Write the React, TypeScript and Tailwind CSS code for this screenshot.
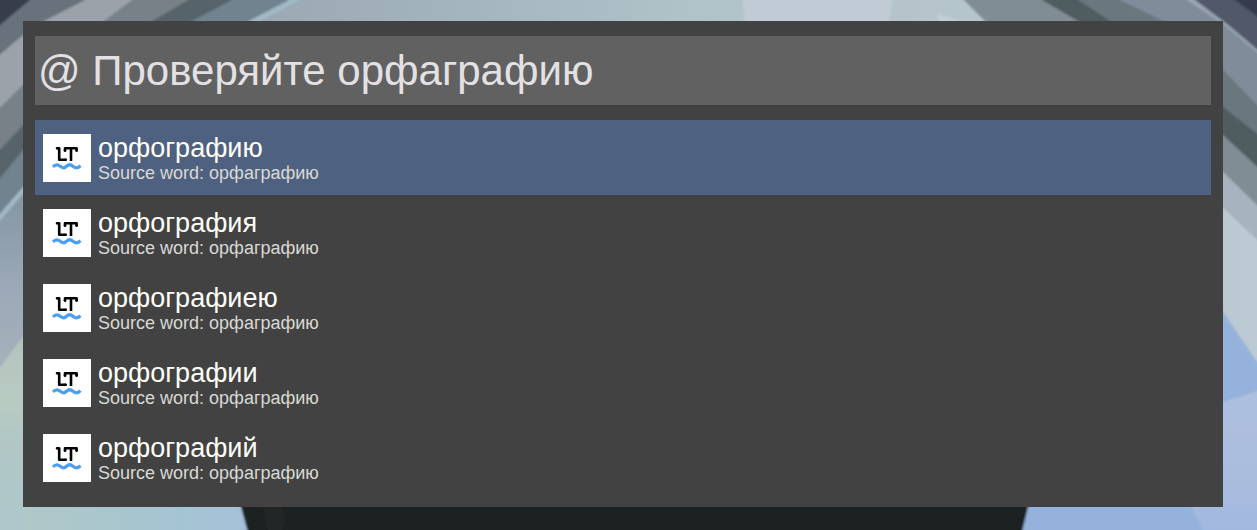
import { useState } from "react";

const SUGGESTIONS = ["орфографию", "орфография", "орфографиею", "орфографии", "орфографий"];

function Wallpaper() {
  return (
    <svg
      className="absolute inset-0 h-full w-full"
      viewBox="0 0 1257 530"
      preserveAspectRatio="none"
      aria-hidden="true"
    >
      <defs>
        <linearGradient id="sky" x1="0" y1="0" x2="1" y2="0">
          <stop offset="0" stopColor="#8d9caa" />
          <stop offset="0.3" stopColor="#a0afb9" />
          <stop offset="0.55" stopColor="#b0c3c9" />
          <stop offset="0.72" stopColor="#b4c4ca" />
          <stop offset="1" stopColor="#bccad3" />
        </linearGradient>
        <linearGradient id="leftShade" x1="0" y1="200" x2="0" y2="370" gradientUnits="userSpaceOnUse">
          <stop offset="0" stopColor="#8597a4" />
          <stop offset="0.5" stopColor="#9ba8b7" />
          <stop offset="1" stopColor="#a5b2bb" />
        </linearGradient>
        <linearGradient id="meadow" x1="0" y1="340" x2="0" y2="530" gradientUnits="userSpaceOnUse">
          <stop offset="0" stopColor="#b4c4bf" />
          <stop offset="0.3" stopColor="#b8cac2" />
          <stop offset="0.6" stopColor="#b0c7c6" />
          <stop offset="1" stopColor="#adc7cb" />
        </linearGradient>
        <linearGradient id="floor" x1="20" y1="0" x2="245" y2="0" gradientUnits="userSpaceOnUse">
          <stop offset="0" stopColor="#b0c8c8" />
          <stop offset="0.6" stopColor="#a6c5d0" />
          <stop offset="1" stopColor="#a5c1da" />
        </linearGradient>
        <linearGradient id="haze" x1="0" y1="390" x2="0" y2="530" gradientUnits="userSpaceOnUse">
          <stop offset="0" stopColor="#adc0df" />
          <stop offset="0.5" stopColor="#acbedd" />
          <stop offset="1" stopColor="#a2b8df" />
        </linearGradient>
        <filter id="soft" x="-5%" y="-5%" width="110%" height="110%">
          <feGaussianBlur stdDeviation="1.2" />
        </filter>
      </defs>
      <rect width="1257" height="530" fill="url(#sky)" />
      <rect y="180" width="60" height="200" fill="url(#leftShade)" />
      <g filter="url(#soft)">
        <path d="M-9 231L23 194L260 21L300 0V-9H-9Z" fill="#a3bac6" />
        <path d="M-9 224L23 187L249 21L289 0V-9H-9Z" fill="#6f838e" />
        <path d="M-9 189L23 150L152 47L192 21L232 0V-9H-9Z" fill="#57646a" />
        <path d="M-9 159L23 125L152 21L188 0V-9H-9Z" fill="#788187" />
        <path d="M-9 116L23 85L104 21L132 0V-9H-9Z" fill="#9ba2aa" />
        <path d="M-9 62L23 35L44 21L85 0V-9H-9Z" fill="#67717b" />
        <path d="M-9 32L0 25L30 0V-9H-9Z" fill="#373e4b" />

        <path d="M742 -9H894L888 30H745Z" fill="#c0cbd5" />
        <path d="M894 -9H965L1223 208L1266 248V-9Z" fill="#a7b4bf" />
        <path d="M938 13L985 30H938Z" fill="#c0ced5" />
        <path d="M955 -9L985 21L1223 172L1266 214V-9Z" fill="#808d95" />
        <path d="M1034 -9L1042 0L1078 21L1223 135L1266 175V-9Z" fill="#4f5c61" />
        <path d="M1070 -9L1078 0L1110 21L1223 107L1266 141V-9Z" fill="#69777f" />
        <path d="M1112 -9L1120 0L1163 21L1223 70L1266 114V-9Z" fill="#808c99" />
        <path d="M1178 -9L1187 0L1223 24L1266 60V-9Z" fill="#9aa8b3" />
        <path d="M1186 -9L1195 0L1227 24L1266 57V-9Z" fill="#515869" />
        <path d="M1222 -9L1235 0L1266 23V-9Z" fill="#353b4d" />

        <path d="M-9 379L23 337L60 300V540H-9Z" fill="url(#meadow)" />
        <rect x="23" y="495" width="225" height="45" fill="url(#floor)" />
        <path d="M1210 293L1223 312L1266 375V540H1010V495H1210Z" fill="#94b2db" />
        <path d="M1200 408L1223 402L1266 388V540H1208L1188 500Z" fill="url(#haze)" />
        <path d="M239 495L241 507L250 540H1020L1028 507L1031 495Z" fill="#1e2323" />
        <path d="M263 507H280Q290 518 282 530H268Z" fill="#222725" />
      </g>
    </svg>
  );
}

function LanguageToolIcon() {
  return (
    <svg className="size-12 shrink-0 bg-white" viewBox="0 0 48 48" fill="none" aria-hidden="true">
      <path
        d="M14 14.2H16.2V25.8H22.8M22 17V14.2H33.6V17M28 14.2V27"
        stroke="#000"
        strokeWidth="2.6"
        strokeLinejoin="round"
      />
      <path d="M14 14.2H14.1M22.7 25.8H22.8M22 16.6V16.7M33.6 16.6V16.7" stroke="#000" strokeWidth="2.6" strokeLinecap="round" />
      <path
        d="M10 32.8C12.2 30.6 15 30.4 17.2 32.2C19.4 34.4 21.6 34.4 23.6 32.2C25.6 30.4 27.8 30.4 29.8 32.2C32 34.4 35 34.4 37.4 31.6"
        stroke="#4a9ff0"
        strokeWidth="3.3"
      />
    </svg>
  );
}

export default function App() {
  const [query, setQuery] = useState("@ Проверяйте орфаграфию");
  const [selected, setSelected] = useState(0);

  return (
    <div className="relative min-h-screen overflow-hidden font-['Liberation_Sans',Arial,sans-serif]">
      <Wallpaper />
      <main className="relative mt-[21px] mr-[34px] mb-[23px] ml-[23px] bg-[#424242] px-3 pt-[15px] pb-3">
        <input
          type="text"
          aria-label="Query"
          value={query}
          onChange={(e) => setQuery(e.target.value)}
          className="block h-[69px] w-full bg-[#616161] px-[3px] text-[42px] text-[#e3e1e3] outline-none"
        />
        <ul className="mt-[15px]">
          {SUGGESTIONS.map((word, i) => (
            <li key={word}>
              <button
                type="button"
                aria-pressed={i === selected}
                onClick={() => setSelected(i)}
                className={`flex h-[75px] w-full items-center gap-[7px] px-2 text-left ${
                  i === selected ? "bg-[#4f6180]" : "bg-transparent"
                }`}
              >
                <LanguageToolIcon />
                <span className="flex min-w-0 flex-col">
                  <span className="truncate text-[27px] leading-[30px] text-[#fffff8]">{word}</span>
                  <span className="truncate text-[18px] leading-5 text-[#d9d9d4]">
                    Source word: орфаграфию
                  </span>
                </span>
              </button>
            </li>
          ))}
        </ul>
      </main>
    </div>
  );
}
